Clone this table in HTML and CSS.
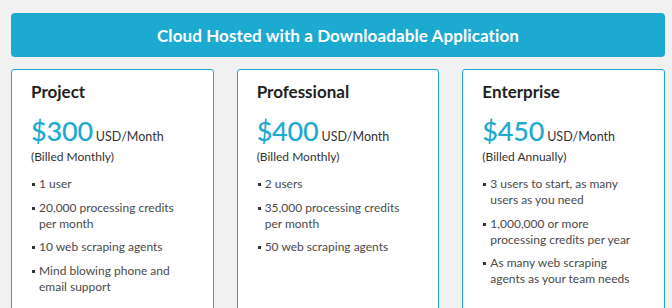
FILE: index.html
```html
<!DOCTYPE html>
<html>
<head>
<meta charset="utf-8">
<link rel="stylesheet" href="styles.css">
</head>
<body>
<div class="wrap">
  <div class="banner">Cloud Hosted with a Downloadable Application</div>
  <div class="cards">
    <div class="card">
      <h2 class="title">Project</h2>
      <div class="price"><span class="amount">$300</span><span class="unit">USD/Month</span></div>
      <div class="billing">(Billed Monthly)</div>
      <ul class="features">
        <li>1 user</li>
        <li>20,000 processing credits per month</li>
        <li>10 web scraping agents</li>
        <li>Mind blowing phone and email support</li>
      </ul>
    </div>
    <div class="card">
      <h2 class="title">Professional</h2>
      <div class="price"><span class="amount">$400</span><span class="unit">USD/Month</span></div>
      <div class="billing">(Billed Monthly)</div>
      <ul class="features">
        <li>2 users</li>
        <li>35,000 processing credits per month</li>
        <li>50 web scraping agents</li>
      </ul>
    </div>
    <div class="card">
      <h2 class="title">Enterprise</h2>
      <div class="price"><span class="amount">$450</span><span class="unit">USD/Month</span></div>
      <div class="billing">(Billed Annually)</div>
      <ul class="features">
        <li>3 users to start, as many users as you need</li>
        <li>1,000,000 or more processing credits per year</li>
        <li>As many web scraping agents as your team needs</li>
      </ul>
    </div>
  </div>
</div>
</body>
</html>
```
FILE: styles.css
```css
html, body {
  margin: 0;
  padding: 0;
  background: #f1f1f1;
  font-family: Lato, "Noto Sans", sans-serif;
  color: #222;
  overflow: hidden;
}
.wrap {
  padding: 13px 7px 0 11px;
}
.banner {
  background: #1caad1;
  color: #fff;
  border-radius: 4px;
  height: 44px;
  display: flex;
  align-items: center;
  justify-content: center;
  font-size: 17px;
  font-weight: 700;
  letter-spacing: 0.1px;
}
.cards {
  display: grid;
  grid-template-columns: repeat(3, 1fr);
  gap: 23px;
  margin-top: 12px;
}
.card {
  background: #fff;
  border: 1px solid #1caad1;
  border-radius: 3px;
  padding: 11px 24px 0 19px;
  height: 250px;
}
.title {
  margin: 0;
  font-size: 17px;
  font-weight: 700;
  line-height: 22px;
  color: #1f1f1f;
}
.price {
  margin-top: 13px;
  display: flex;
  align-items: baseline;
  line-height: 30px;
}
.amount {
  font-size: 27px;
  color: #1caad1;
  font-weight: 500;
  letter-spacing: -0.2px;
}
.unit {
  font-size: 12.5px;
  margin-left: 3px;
  color: #333;
}
.billing {
  font-size: 12px;
  line-height: 15px;
  color: #333;
  margin-top: -3px;
}
.features {
  list-style: none;
  margin: 12px 0 0 0;
  padding: 0;
}
.features li {
  position: relative;
  padding-left: 8px;
  font-size: 12px;
  line-height: 16px;
  color: #4a4a4a;
  margin-bottom: 7.5px;
}
.features li::before {
  content: "";
  position: absolute;
  left: 1px;
  top: 7px;
  width: 3px;
  height: 3px;
  background: #333;
}
```
